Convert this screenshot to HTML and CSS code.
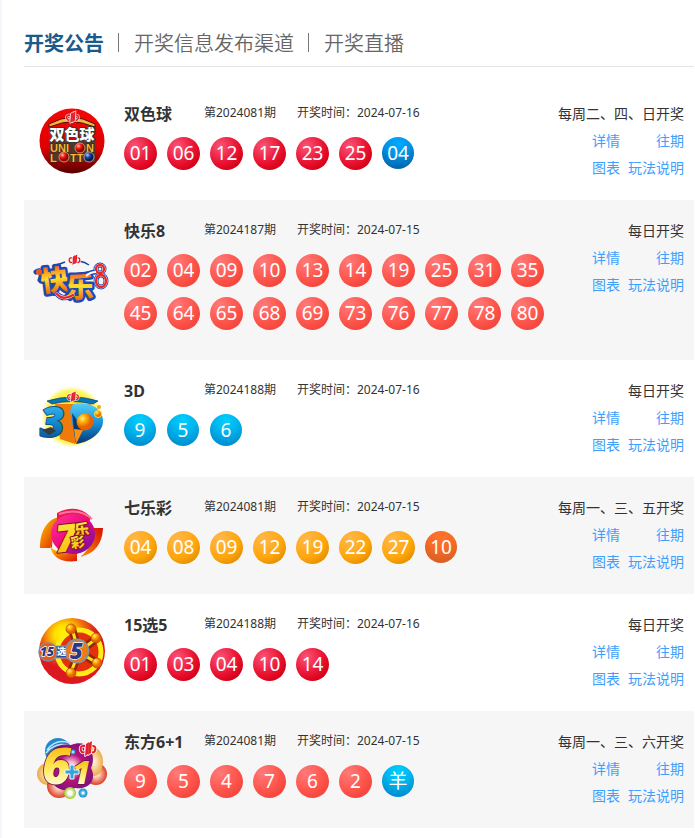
FILE: index.html
```html
<!DOCTYPE html>
<html lang="zh-CN">
<head>
    <meta charset="UTF-8">
    <meta name="viewport" content="width=device-width, initial-scale=1.0">
    <title>开奖公告</title>
    <link rel="stylesheet" href="styles.css">
</head>
<body>
    <!-- shared lottery emblem and gradients -->
    <svg class="defs" width="0" height="0" aria-hidden="true">
        <defs>
            <symbol id="emblem" viewBox="0 0 16 14" overflow="visible">
                <g fill="#e5202c" stroke="#fff" stroke-width="1.6" paint-order="stroke" stroke-linejoin="round">
                    <path fill-rule="evenodd" d="M6 3H3C0 3-1 6 0 9s4 3 6 1zM5 5v4c-2 1-3 0-3-1-1-2 0-3 1-3zM10 3h3c3 0 4 3 3 6s-4 3-6 1zM11 5v4c2 1 3 0 3-1 1-2 0-3-1-3z"/>
                    <path d="M6 2l3-2-1 12-3 2zM9 1l3-2-1 12-3 2z"/>
                </g>
            </symbol>
            <linearGradient id="redDome" x1="0" y1="0" x2="0" y2="1"><stop offset="0" stop-color="#f30808"/><stop offset=".6" stop-color="#df0000"/><stop offset="1" stop-color="#570000"/></linearGradient>
            <linearGradient id="gold" x1="0" y1="0" x2="0" y2="1"><stop offset="0" stop-color="#fff04a"/><stop offset="1" stop-color="#fbb400"/></linearGradient>
            <linearGradient id="fire" x1="0" y1="0" x2="0" y2="1"><stop offset=".2" stop-color="#ff6a12"/><stop offset=".5" stop-color="#ffdf2c"/><stop offset=".85" stop-color="#f36a00"/></linearGradient>
            <linearGradient id="sea" x1="0" y1="0" x2="0" y2="1"><stop offset="0" stop-color="#55cdf6"/><stop offset=".5" stop-color="#168fd8"/><stop offset="1" stop-color="#063672"/></linearGradient>
            <linearGradient id="sunset" x1="0" y1="0" x2="1" y2="1"><stop offset="0" stop-color="#ffd400"/><stop offset="1" stop-color="#df1005"/></linearGradient>
            <linearGradient id="sunsetBack" x1="1" y1="0" x2="0" y2="1"><stop offset="0" stop-color="#d80b05"/><stop offset="1" stop-color="#ff9500"/></linearGradient>
            <linearGradient id="magenta" x1="0" y1="0" x2="1" y2="1"><stop offset="0" stop-color="#ff3a9c"/><stop offset=".5" stop-color="#ed087c"/><stop offset="1" stop-color="#5612b8"/></linearGradient>
            <linearGradient id="creamGold" x1="0" y1="0" x2="0" y2="1"><stop offset=".1" stop-color="#f4a800"/><stop offset=".5" stop-color="#ffe44d"/><stop offset=".8" stop-color="#fffbd0"/></linearGradient>
            <radialGradient id="glow"><stop offset=".6" stop-color="#ffef00"/><stop offset=".85" stop-color="#fff67a"/><stop offset="1" stop-color="#fff" stop-opacity="0"/></radialGradient>
            <radialGradient id="orangeBall" cx=".35" cy=".3"><stop offset="0" stop-color="#fff176"/><stop offset=".45" stop-color="#ffae08"/><stop offset="1" stop-color="#e66100"/></radialGradient>
            <radialGradient id="redBall" cx=".35" cy=".3"><stop offset="0" stop-color="#ffc0b4"/><stop offset=".5" stop-color="#f21d12"/><stop offset="1" stop-color="#9c0000"/></radialGradient>
            <radialGradient id="blueBall" cx=".35" cy=".3"><stop offset="0" stop-color="#b0d2ff"/><stop offset=".5" stop-color="#174db5"/><stop offset="1" stop-color="#041952"/></radialGradient>
            <radialGradient id="sun" cx=".38" cy=".25"><stop offset="0" stop-color="#fff700"/><stop offset=".3" stop-color="#ffdd00"/><stop offset=".65" stop-color="#ee690f"/><stop offset="1" stop-color="#dc1820"/></radialGradient>
            <radialGradient id="greenRing"><stop offset=".3" stop-color="#fff"/><stop offset="1" stop-color="#9bc51c"/></radialGradient>
            <radialGradient id="cyanRing"><stop offset=".15" stop-color="#fff"/><stop offset=".5" stop-color="#4fb5e5"/><stop offset="1" stop-color="#168bcf"/></radialGradient>
            <radialGradient id="peach"><stop offset="0" stop-color="#fff5df"/><stop offset="1" stop-color="#efaa44"/></radialGradient>
            <radialGradient id="coral"><stop offset=".2" stop-color="#ffe3ce"/><stop offset="1" stop-color="#df3d26"/></radialGradient>
            <radialGradient id="violet"><stop offset=".2" stop-color="#f6c1d9"/><stop offset=".55" stop-color="#b91479"/><stop offset="1" stop-color="#87107c"/></radialGradient>
        </defs>
    </svg>

    <main class="page">
        <nav class="tabs">
            <a href="#" class="tab active">开奖公告</a>
            <a href="#" class="tab">开奖信息发布渠道</a>
            <a href="#" class="tab">开奖直播</a>
        </nav>

        <section class="draw">
            <svg class="logo" viewBox="-6 1 100 80" role="img" aria-label="双色球">
                <circle cx="42" cy="41" r="32.5" fill="url(#redDome)"/>
                <path d="M19 27v-3l12-5q11-3 22 0l12 5v3l-13-4q-10-3-20 0z" fill="#f1b63b" stroke="#56100a" stroke-width="1"/>
                <use href="#emblem" x="36" y="12" width="13" height="11"/>
                <rect x="20" y="42" width="45" height="20" fill="#54352c"/>
                <text x="42" y="40" class="logo-cjk" font-size="15" text-anchor="middle" fill="#fff" stroke="#36393d" stroke-width="2">双色球</text>
                <g class="logo-latin" font-size="11" fill="#f4b932" stroke="#392017" stroke-width="1">
                    <text x="20" y="52">UNI</text><text x="56" y="52">N</text>
                    <text x="20" y="62">L</text><text x="40" y="62">TT</text>
                </g>
                <circle cx="50" cy="48" r="5" fill="url(#redBall)" stroke="#e9c58a" stroke-width=".7"/>
                <circle cx="34" cy="57" r="5" fill="url(#redBall)" stroke="#e9c58a" stroke-width=".7"/>
                <circle cx="59" cy="57" r="5" fill="url(#blueBall)" stroke="#e9c58a" stroke-width=".7"/>
            </svg>
            <div class="info">
                <div class="heading">
                    <h2 class="name">双色球</h2>
                    <span class="issue">第2024081期</span>
                    <span class="time">开奖时间：2024-07-16</span>
                </div>
                <div class="balls">
                    <span class="ball red">01</span><span class="ball red">06</span><span class="ball red">12</span><span class="ball red">17</span><span class="ball red">23</span><span class="ball red">25</span><span class="ball blue">04</span>
                </div>
            </div>
            <div class="side">
                <p class="schedule">每周二、四、日开奖</p>
                <div class="links"><a href="#">详情</a><a href="#">往期</a><a href="#">图表</a><a href="#">玩法说明</a></div>
            </div>
        </section>

        <section class="draw">
            <svg class="logo" viewBox="-6 -5 100 80" role="img" aria-label="快乐8">
                <path d="M27 21l8-3M49 17q6 1 10 4" fill="none" stroke="#1d43a2" stroke-width="1.5"/>
                <use href="#emblem" x="38" y="11" width="13" height="10"/>
                <g fill="none" stroke="#1847b4" stroke-width="5" stroke-linecap="round">
                    <path d="M6 28q4-3 5 1t-1 7M27 50q6 7 16 1M56 32q4-4 10-4"/>
                    <ellipse cx="70" cy="25" rx="4" ry="4"/><ellipse cx="71" cy="37" rx="5" ry="6"/>
                </g>
                <g class="logo-cjk" font-size="28" fill="url(#fire)">
                    <text x="12" y="48" transform="rotate(-7 12 48)" stroke="#1b49b6" stroke-width="5">快</text>
                    <text x="36" y="54" stroke="#1b49b6" stroke-width="5">乐</text>
                </g>
                <g fill="none" stroke="#fff" stroke-width="3.2" stroke-linecap="round">
                    <ellipse cx="70" cy="25" rx="4" ry="4"/><ellipse cx="71" cy="37" rx="5" ry="6"/><path d="M27 50q6 7 16 1"/>
                </g>
                <g fill="none" stroke="#e92727" stroke-width="2.4" stroke-linecap="round">
                    <ellipse cx="70" cy="25" rx="4" ry="4"/><ellipse cx="71" cy="37" rx="5" ry="6"/><path d="M27 50q6 7 16 1"/>
                </g>
                <path d="M56 32q4-4 10-4" fill="none" stroke="#fff" stroke-width="2"/>
                <circle cx="9" cy="28" r="3" fill="#ed571d"/>
            </svg>
            <div class="info">
                <div class="heading">
                    <h2 class="name">快乐8</h2>
                    <span class="issue">第2024187期</span>
                    <span class="time">开奖时间：2024-07-15</span>
                </div>
                <div class="balls">
                    <span class="ball coral">02</span><span class="ball coral">04</span><span class="ball coral">09</span><span class="ball coral">10</span><span class="ball coral">13</span><span class="ball coral">14</span><span class="ball coral">19</span><span class="ball coral">25</span><span class="ball coral">31</span><span class="ball coral">35</span>
                    <span class="ball coral">45</span><span class="ball coral">64</span><span class="ball coral">65</span><span class="ball coral">68</span><span class="ball coral">69</span><span class="ball coral">73</span><span class="ball coral">76</span><span class="ball coral">77</span><span class="ball coral">78</span><span class="ball coral">80</span>
                </div>
            </div>
            <div class="side">
                <p class="schedule">每日开奖</p>
                <div class="links"><a href="#">详情</a><a href="#">往期</a><a href="#">图表</a><a href="#">玩法说明</a></div>
            </div>
        </section>

        <section class="draw">
            <svg class="logo" viewBox="-6 -1 100 80" role="img" aria-label="3D">
                <circle cx="42" cy="38" r="32" fill="url(#glow)"/>
                <path d="M25 25h36l-16 40-15-5z" fill="#f17a0d"/>
                <path d="M17 22q26-8 51 0l-5 3q-22-5-41 0z" fill="#0875b8" stroke="#073e75" stroke-width=".7"/>
                <path d="M43 25c18-3 29 5 30 16S61 63 46 65l-6-33z" fill="url(#sea)"/>
                <path d="M42 34l4 31 7-15z" fill="#06376d"/>
                <path d="M46 65l-2-15 9 1z" fill="#f79417"/>
                <g class="logo-digit" font-size="42">
                    <text x="10" y="58" fill="url(#sea)" stroke="#075391" stroke-width="2">3</text>
                </g>
                <path d="M12 51l9-3 5 4-7 4z" fill="#393c3d"/>
                <circle cx="55" cy="43" r="8.5" fill="url(#orangeBall)"/>
                <circle cx="68" cy="35" r="3.5" fill="url(#orangeBall)" stroke="#ffe335"/>
                <circle cx="69" cy="28" r="2" fill="#f8a60e"/>
                <use href="#emblem" x="37" y="13" width="12" height="10"/>
            </svg>
            <div class="info">
                <div class="heading">
                    <h2 class="name">3D</h2>
                    <span class="issue">第2024188期</span>
                    <span class="time">开奖时间：2024-07-16</span>
                </div>
                <div class="balls">
                    <span class="ball cyan">9</span><span class="ball cyan">5</span><span class="ball cyan">6</span>
                </div>
            </div>
            <div class="side">
                <p class="schedule">每日开奖</p>
                <div class="links"><a href="#">详情</a><a href="#">往期</a><a href="#">图表</a><a href="#">玩法说明</a></div>
            </div>
        </section>

        <section class="draw">
            <svg class="logo" viewBox="-6 -5 100 80" role="img" aria-label="七乐彩">
                <path d="M10 48C10 32 16 20 29 17l-2 10q-5 9-5 21z" fill="url(#sunset)"/>
                <path d="M20 46q6 9 27 7v8q-23 3-27-15z" fill="url(#sunset)"/>
                <path d="M27 13q20-10 34 4l-3 9q-13-10-31-6z" fill="#ed1b4d"/>
                <path d="M57 28h16q-1 24-23 29 10-8 12-18z" fill="url(#sunsetBack)"/>
                <ellipse cx="43" cy="34" rx="22" ry="20" fill="url(#magenta)"/>
                <path d="M29 14q20-7 33 5" fill="none" stroke="#ff72a5" stroke-width="2"/>
                <g transform="rotate(-6 43 36)" stroke="#7b102d" stroke-width="2" fill="url(#gold)">
                    <text x="25" y="51" class="logo-digit" font-size="38">7</text>
                    <text x="45" y="36" class="logo-cjk" font-size="15">乐</text>
                    <text x="40" y="48" class="logo-cjk" font-size="14">彩</text>
                </g>
            </svg>
            <div class="info">
                <div class="heading">
                    <h2 class="name">七乐彩</h2>
                    <span class="issue">第2024081期</span>
                    <span class="time">开奖时间：2024-07-15</span>
                </div>
                <div class="balls">
                    <span class="ball yellow">04</span><span class="ball yellow">08</span><span class="ball yellow">09</span><span class="ball yellow">12</span><span class="ball yellow">19</span><span class="ball yellow">22</span><span class="ball yellow">27</span><span class="ball orange">10</span>
                </div>
            </div>
            <div class="side">
                <p class="schedule">每周一、三、五开奖</p>
                <div class="links"><a href="#">详情</a><a href="#">往期</a><a href="#">图表</a><a href="#">玩法说明</a></div>
            </div>
        </section>

        <section class="draw">
            <svg class="logo" viewBox="-6 3 100 80" role="img" aria-label="15选5">
                <circle cx="42" cy="42" r="33" fill="url(#sun)"/>
                <circle cx="49" cy="43" r="22" fill="#e4310b" stroke="#ffeb15" stroke-width="5"/>
                <path d="M49 43L42 20M49 43l18-14M49 43l18 11M49 43l-8 20" stroke="#8d2908" stroke-width="8"/>
                <path d="M49 43L42 20M49 43l18-14M49 43l18 11M49 43l-8 20" stroke="#ffe116" stroke-width="3"/>
                <g fill="url(#orangeBall)" stroke="#a33b0b" stroke-width=".6">
                    <circle cx="41" cy="20" r="5"/><circle cx="66" cy="29" r="5"/><circle cx="67" cy="54" r="5"/><circle cx="41" cy="64" r="5"/>
                </g>
                <rect x="20" y="37" width="28" height="12" fill="#254b9e" stroke="#92a4bc"/>
                <circle cx="18" cy="43" r="9" fill="#e85a12" stroke="#82889b" stroke-width="1.5"/>
                <circle cx="47" cy="42" r="11.5" fill="#f17813" stroke="#879299" stroke-width="1.8"/>
                <g class="logo-digit" fill="#293888" stroke="#fff" stroke-width="1.4">
                    <text x="10" y="47" font-size="12">15</text>
                    <text x="40" y="50" font-size="22">5</text>
                </g>
                <text x="27" y="46" class="logo-cjk" font-size="9" fill="#fff">选</text>
            </svg>
            <div class="info">
                <div class="heading">
                    <h2 class="name">15选5</h2>
                    <span class="issue">第2024188期</span>
                    <span class="time">开奖时间：2024-07-16</span>
                </div>
                <div class="balls">
                    <span class="ball red">01</span><span class="ball red">03</span><span class="ball red">04</span><span class="ball red">10</span><span class="ball red">14</span>
                </div>
            </div>
            <div class="side">
                <p class="schedule">每日开奖</p>
                <div class="links"><a href="#">详情</a><a href="#">往期</a><a href="#">图表</a><a href="#">玩法说明</a></div>
            </div>
        </section>

        <section class="draw">
            <svg class="logo" viewBox="-6 0 100 80" role="img" aria-label="东方6+1">
                <circle cx="28" cy="22" r="13" fill="#2586ca"/>
                <path d="M17 21q9-12 23-7M16 24q10-12 25-7" fill="none" stroke="#b9e6fa" stroke-width="1.5"/>
                <circle cx="18" cy="45" r="11" fill="url(#peach)"/>
                <circle cx="29" cy="57" r="12" fill="url(#coral)"/>
                <circle cx="66" cy="45" r="11" fill="url(#coral)"/>
                <ellipse cx="64" cy="33" rx="9" ry="14" fill="url(#peach)"/>
                <path d="M20 38c-5-14 6-25 21-22 18-7 26 10 20 23 7 14-5 22-16 20-13 7-28-2-25-21z" fill="url(#violet)"/>
                <g class="logo-digit" fill="url(#creamGold)" stroke="#64164d" stroke-width="1.6">
                    <text x="12" y="55" font-size="50">6</text>
                    <text x="42" y="55" font-size="32">1</text>
                </g>
                <path d="M40 36h4v5h5v4h-5v5h-4v-5h-5v-4h5z" fill="#33a4dc" stroke="#e6faff" stroke-width="1"/>
                <circle cx="43" cy="23" r="2.5" fill="url(#cyanRing)"/>
                <circle cx="40" cy="64" r="6" fill="url(#greenRing)"/>
                <circle cx="53" cy="64" r="4.5" fill="url(#cyanRing)"/>
                <use href="#emblem" x="50" y="13" width="16" height="14"/>
            </svg>
            <div class="info">
                <div class="heading">
                    <h2 class="name">东方6+1</h2>
                    <span class="issue">第2024081期</span>
                    <span class="time">开奖时间：2024-07-15</span>
                </div>
                <div class="balls">
                    <span class="ball coral">9</span><span class="ball coral">5</span><span class="ball coral">4</span><span class="ball coral">7</span><span class="ball coral">6</span><span class="ball coral">2</span><span class="ball cyan">羊</span>
                </div>
            </div>
            <div class="side">
                <p class="schedule">每周一、三、六开奖</p>
                <div class="links"><a href="#">详情</a><a href="#">往期</a><a href="#">图表</a><a href="#">玩法说明</a></div>
            </div>
        </section>
    </main>
</body>
</html>
```
FILE: styles.css
```css
* {
    box-sizing: border-box;
}
body {
    margin: 0;
    border-left: 2px solid #f3f7fb;
    background-color: #fff;
    color: #333;
    font-family: "Noto Sans", "Noto Sans CJK SC", sans-serif;
    font-size: 14px;
}
a {
    color: #409eff;
    text-decoration: none;
}
h2, p {
    margin: 0;
}
.defs {
    position: absolute;
}
.page {
    padding: 18px 1px 10px 22px;
}
.tabs {
    display: flex;
    align-items: center;
    height: 49px;
    margin-bottom: 16px;
    padding-top: 1px;
    border-bottom: 1px solid #e5e5e5;
}
.tab {
    color: #666;
    font-family: "Noto Sans CJK SC", sans-serif;
    font-size: 20px;
    font-weight: 350;
    line-height: 20px;
}
.tab.active {
    color: #1a5a8c;
    font-weight: bold;
}
.tab + .tab {
    display: flex;
    align-items: center;
}
.tab + .tab::before {
    content: "";
    width: 1px;
    height: 19px;
    margin: 0 15px 0 14px;
    background-color: #777;
}
.draw {
    display: flex;
    align-items: flex-start;
    padding: 17px 10px 19px 0;
}
.draw:nth-of-type(even) {
    background-color: #f6f6f6;
}
.logo {
    flex: none;
    align-self: center;
    width: 100px;
    height: 80px;
}
.logo-cjk {
    font-family: "Noto Sans CJK SC", sans-serif;
    font-weight: 900;
    paint-order: stroke;
    stroke-linejoin: round;
}
.logo-latin {
    font-family: "Liberation Sans", sans-serif;
    font-weight: bold;
    paint-order: stroke;
}
.logo-digit {
    font-family: "Noto Sans", sans-serif;
    font-style: italic;
    font-weight: 900;
    paint-order: stroke;
    stroke-linejoin: round;
}
.info {
    flex: 1;
    padding-bottom: 11px;
}
.heading {
    display: flex;
    height: 28px;
    margin-bottom: 9px;
    font-size: 12px;
    line-height: 26px;
    white-space: nowrap;
}
.name {
    width: 80px;
    font-size: 16px;
    line-height: 28px;
}
.issue {
    width: 93px;
}
.balls {
    display: grid;
    grid-template-columns: repeat(auto-fill, 33px);
    grid-auto-rows: 33px;
    gap: 10px;
    max-width: 430px;
}
.ball {
    width: 33px;
    height: 33px;
    border-radius: 50%;
    color: #fff;
    font-size: 19px;
    line-height: 33px;
    text-align: center;
}
.red {
    background: radial-gradient(circle at 32% 28%, #fb5577 0%, #ea1434 50%, #d50015 78%, #e10b25 100%);
}
.coral {
    background: radial-gradient(circle at 30% 25%, #ff7b7b 0%, #ff5950 45%, #f4473e 75%, #ff5146 100%);
}
.yellow {
    background: radial-gradient(circle at 32% 25%, #ffb84b 0%, #ffa60c 55%, #e38e00 82%, #f5a000 100%);
}
.blue, .cyan, .orange {
    width: 32px;
    height: 32px;
}
.blue {
    background: radial-gradient(circle at 50% 20%, #00aaff 0%, #0094e8 40%, #0068ae 80%, #0080cc 100%);
}
.cyan {
    background: radial-gradient(circle at 50% 20%, #00cfff 0%, #00b5ee 40%, #0090d2 80%, #00a0dc 100%);
}
.orange {
    background: radial-gradient(circle at 50% 20%, #ff712e 0%, #f86b24 40%, #da6025 80%, #ee6828 100%);
}
.side {
    flex: none;
    line-height: 27px;
    text-align: right;
}
.schedule {
    height: 27px;
}
.links {
    display: grid;
    grid-template-columns: auto auto;
    grid-auto-rows: 27px;
    justify-content: end;
    justify-items: end;
    column-gap: 8px;
}
```
